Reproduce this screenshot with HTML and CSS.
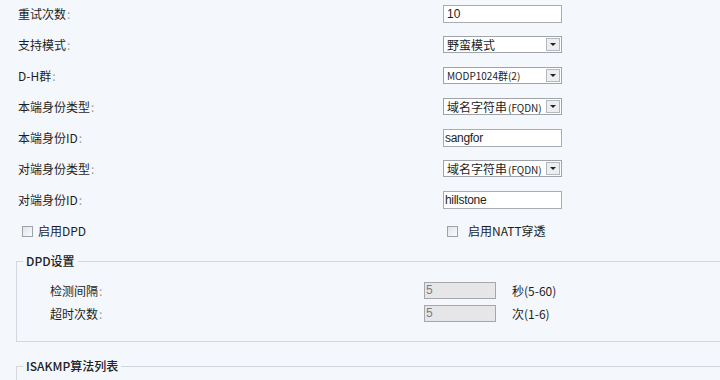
FILE: index.html
```html
<!DOCTYPE html>
<html>
<head>
<meta charset="utf-8">
<link rel="stylesheet" href="styles.css">
</head>
<body>
<div class="page">
  <div class="form">
    <div class="label">重试次数<span class="colon">:</span></div>
    <div class="ctl"><div class="text-box">10</div></div>

    <div class="label">支持模式<span class="colon">:</span></div>
    <div class="ctl"><div class="select"><span class="sel-text">野蛮模式</span><span class="sel-btn"><span class="arrow"></span></span></div></div>

    <div class="label">D-H群<span class="colon">:</span></div>
    <div class="ctl"><div class="select"><span class="sel-text small">MODP1024群(2)</span><span class="sel-btn"><span class="arrow"></span></span></div></div>

    <div class="label">本端身份类型<span class="colon">:</span></div>
    <div class="ctl"><div class="select"><span class="sel-text">域名字符串<span class="lat">(FQDN)</span></span><span class="sel-btn"><span class="arrow"></span></span></div></div>

    <div class="label">本端身份ID<span class="colon">:</span></div>
    <div class="ctl"><div class="text-box latin">sangfor</div></div>

    <div class="label">对端身份类型<span class="colon">:</span></div>
    <div class="ctl"><div class="select"><span class="sel-text">域名字符串<span class="lat">(FQDN)</span></span><span class="sel-btn"><span class="arrow"></span></span></div></div>

    <div class="label">对端身份ID<span class="colon">:</span></div>
    <div class="ctl"><div class="text-box latin">hillstone</div></div>

    <div class="check"><span class="box"></span><span>启用DPD</span></div>
    <div class="check"><span class="box"></span><span class="check-gap">启用NATT穿透</span></div>
  </div>

  <fieldset class="group dpd">
    <legend>DPD设置</legend>
    <div class="dpd-body">
      <div class="sub-row">
        <div class="sub-label">检测间隔<span class="colon">:</span></div>
        <div class="dis-box">5</div>
        <div class="unit">秒(5-60)</div>
      </div>
      <div class="sub-row">
        <div class="sub-label">超时次数<span class="colon">:</span></div>
        <div class="dis-box">5</div>
        <div class="unit">次(1-6)</div>
      </div>
    </div>
  </fieldset>

  <fieldset class="group isakmp">
    <legend>ISAKMP算法列表</legend>
  </fieldset>
</div>
</body>
</html>
```

FILE: styles.css
```css
html, body {
  margin: 0;
  padding: 0;
  background: #f4f7fc;
  overflow: hidden;
}
body {
  width: 720px;
  height: 380px;
  font-family: "Noto Sans CJK SC", "DejaVu Sans", sans-serif;
  font-size: 12px;
  color: #1e1e1e;
}
.page {
  box-sizing: border-box;
  height: 380px;
  overflow: hidden;
  padding-top: 5px;
}
.form {
  display: grid;
  grid-template-columns: 425px 119px;
  grid-auto-rows: 18px;
  row-gap: 13px;
  padding-left: 18px;
}
.label {
  display: flex;
  align-items: center;
  line-height: 18px;
}
.colon {
  color: #9aa0a8;
  margin-left: 1px;
}
.ctl {
  display: flex;
}
.text-box {
  box-sizing: border-box;
  width: 119px;
  height: 18px;
  background: #fff;
  border: 1px solid #a9adb3;
  line-height: 16px;
  padding-left: 3px;
  font-family: "Liberation Sans", sans-serif;
  font-size: 12px;
}
.text-box.latin {
  padding-left: 1px;
  letter-spacing: -0.3px;
}
.select {
  box-sizing: border-box;
  width: 119px;
  height: 17px;
  background: #fff;
  border: 1px solid #9fa4ab;
  display: flex;
  align-items: center;
  justify-content: space-between;
  padding: 0 1px 0 3px;
}
.sel-text {
  font-size: 12px;
  line-height: 15px;
  white-space: nowrap;
  overflow: hidden;
}
.sel-text.small {
  font-size: 10px;
}
.lat {
  font-size: 10px;
  margin-left: 1px;
}
.sel-btn {
  box-sizing: border-box;
  width: 14px;
  height: 13px;
  border: 1px solid #b4b8be;
  background: #eceef1;
  display: flex;
  align-items: center;
  justify-content: center;
  flex: none;
}
.arrow {
  width: 0;
  height: 0;
  border-left: 3px solid transparent;
  border-right: 3px solid transparent;
  border-top: 3px solid #222;
}
.check {
  display: flex;
  align-items: center;
  padding-left: 4px;
  line-height: 18px;
}
.box {
  box-sizing: border-box;
  width: 11px;
  height: 11px;
  border: 1px solid #9ea3aa;
  background: linear-gradient(135deg, #e2e4e8, #fbfbfc);
  margin-right: 5px;
  flex: none;
}
.check-gap {
  margin-left: 5px;
}
.group {
  margin: 0 -30px 0 16px;
  border: 1px solid #d3d8df;
  border-right: none;
  padding: 0;
  min-width: 0;
}
.group legend {
  padding: 0 3px;
  margin-left: 6px;
  line-height: 16px;
  font-size: 12px;
  font-weight: 500;
  color: #222;
}
.dpd {
  margin-top: 13px;
}
.dpd-body {
  padding: 13px 0 19px 33px;
}
.sub-row {
  display: grid;
  grid-template-columns: 358px 72px auto;
  column-gap: 16px;
  align-items: center;
  height: 17px;
}
.sub-row + .sub-row {
  margin-top: 6px;
}
.sub-label {
  line-height: 17px;
}
.dis-box {
  box-sizing: border-box;
  height: 17px;
  border: 1px solid #a4a7ab;
  background: #e6e6e8;
  color: #7a7d82;
  font-family: "Liberation Sans", sans-serif;
  font-size: 12px;
  line-height: 15px;
  padding-left: 1px;
}
.unit {
  font-size: 12px;
  white-space: nowrap;
}
.isakmp {
  margin-top: 16px;
  height: 40px;
}
```
